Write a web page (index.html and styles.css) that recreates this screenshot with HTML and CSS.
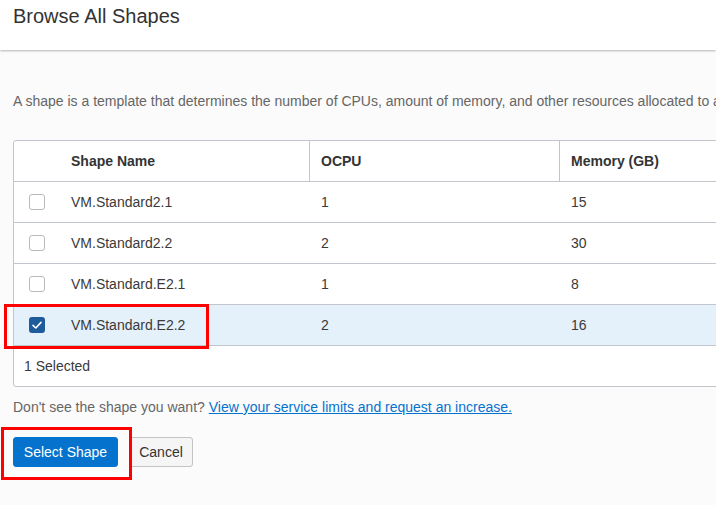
FILE: index.html
```html
<!DOCTYPE html>
<html>
<head>
<meta charset="utf-8">
<link rel="stylesheet" href="styles.css">
</head>
<body>
<header class="top">
  <h1 class="title">Browse All Shapes</h1>
</header>
<main class="content">
  <p class="desc">A shape is a template that determines the number of CPUs, amount of memory, and other resources allocated to a newly created instance.</p>
  <div class="tablebox">
    <table class="grid">
      <thead>
        <tr>
          <th class="c-check"></th>
          <th class="c-name sep">Shape Name</th>
          <th class="c-ocpu sep">OCPU</th>
          <th class="c-mem">Memory (GB)</th>
        </tr>
      </thead>
      <tbody>
        <tr>
          <td class="c-check"><span class="cb"></span></td>
          <td class="c-name">VM.Standard2.1</td>
          <td class="c-ocpu">1</td>
          <td class="c-mem">15</td>
        </tr>
        <tr>
          <td class="c-check"><span class="cb"></span></td>
          <td class="c-name">VM.Standard2.2</td>
          <td class="c-ocpu">2</td>
          <td class="c-mem">30</td>
        </tr>
        <tr>
          <td class="c-check"><span class="cb"></span></td>
          <td class="c-name">VM.Standard.E2.1</td>
          <td class="c-ocpu">1</td>
          <td class="c-mem">8</td>
        </tr>
        <tr class="selected">
          <td class="c-check"><span class="cb checked"><svg width="16" height="16" viewBox="0 0 16 16"><path d="M4 8.3 L6.8 11 L12 5.4" fill="none" stroke="#fff" stroke-width="1.6" stroke-linecap="round" stroke-linejoin="round"/></svg></span></td>
          <td class="c-name">VM.Standard.E2.2</td>
          <td class="c-ocpu">2</td>
          <td class="c-mem">16</td>
        </tr>
      </tbody>
    </table>
    <div class="footer">1 Selected</div>
  </div>
  <p class="limits">Don't see the shape you want? <a class="link" href="#">View your service limits and request an increase.</a></p>
  <div class="actions">
    <button class="btn primary">Select Shape</button>
    <button class="btn secondary">Cancel</button>
  </div>
</main>
<div class="mark mark-row"></div>
<div class="mark mark-btn"></div>
</body>
</html>
```
FILE: styles.css
```css
html, body {
  margin: 0;
  padding: 0;
}
body {
  background: #fbfbfb;
  font-family: "Liberation Sans", Arial, sans-serif;
  color: #333;
  width: 716px;
  height: 505px;
  overflow: hidden;
  position: relative;
}
.top {
  height: 50px;
  background: #fff;
  box-shadow: 0 1px 2px rgba(0,0,0,0.28);
  padding: 5px 0 0 13px;
  box-sizing: border-box;
  position: relative;
  z-index: 1;
}
.title {
  margin: 0;
  font-size: 20px;
  line-height: 23px;
  font-weight: normal;
  color: #333;
}
.content {
  padding: 0 0 0 13px;
}
.desc {
  margin: 43px 0 0 0;
  font-size: 14px;
  line-height: 17px;
  color: #666;
  white-space: nowrap;
}
.tablebox {
  margin-top: 30px;
  width: 900px;
  background: #fff;
  border: 1px solid #c1c6cc;
  border-radius: 3px;
}
.grid {
  border-collapse: separate;
  border-spacing: 0;
  width: 100%;
  table-layout: fixed;
  font-size: 14px;
}
.grid th, .grid td {
  height: 40px;
  padding: 0;
  border-bottom: 1px solid #c1c6cc;
  text-align: left;
  vertical-align: middle;
  box-sizing: content-box;
}
.grid th {
  font-weight: bold;
  color: #333;
}
.grid td {
  color: #3a3a3a;
}
.grid .sep {
  border-right: 1px solid #c1c6cc;
}
.grid .c-check {
  padding-left: 15px;
  width: 28px;
}
.grid .c-name {
  width: 238px;
  padding-left: 14px;
}
.grid .c-ocpu {
  width: 238px;
  padding-left: 11px;
}
.grid .c-mem {
  padding-left: 11px;
}
.cb {
  display: block;
  width: 14px;
  height: 14px;
  border: 1px solid #b9b9b9;
  border-radius: 3px;
  background: #fff;
}
.cb.checked {
  width: 16px;
  height: 16px;
  border: none;
  background: #1d5b9b;
}
.cb svg {
  display: block;
}
.selected td {
  background: #e4f0fa;
}
.footer {
  height: 40px;
  line-height: 40px;
  padding-left: 10px;
  font-size: 14px;
  color: #3a3a3a;
}
.limits {
  margin: 12px 0 0 0;
  font-size: 14px;
  line-height: 17px;
  color: #666;
}
.link {
  color: #0572ce;
  text-decoration: underline;
}
.actions {
  margin-top: 21px;
  display: flex;
  gap: 11px;
}
.btn {
  height: 30px;
  font-family: "Liberation Sans", Arial, sans-serif;
  font-size: 14px;
  border-radius: 3px;
  padding: 0;
  white-space: nowrap;
  cursor: pointer;
}
.primary {
  background: #0572ce;
  color: #fff;
  border: 1px solid #0572ce;
  width: 105px;
}
.secondary {
  background: #f5f5f5;
  color: #333;
  border: 1px solid #c4c4c4;
  width: 64px;
}
.mark {
  position: absolute;
  border: 3px solid #f00;
  box-sizing: border-box;
}
.mark-row {
  left: 4px;
  top: 304px;
  width: 205px;
  height: 45px;
}
.mark-btn {
  left: 1px;
  top: 427px;
  width: 131px;
  height: 53px;
}
```
